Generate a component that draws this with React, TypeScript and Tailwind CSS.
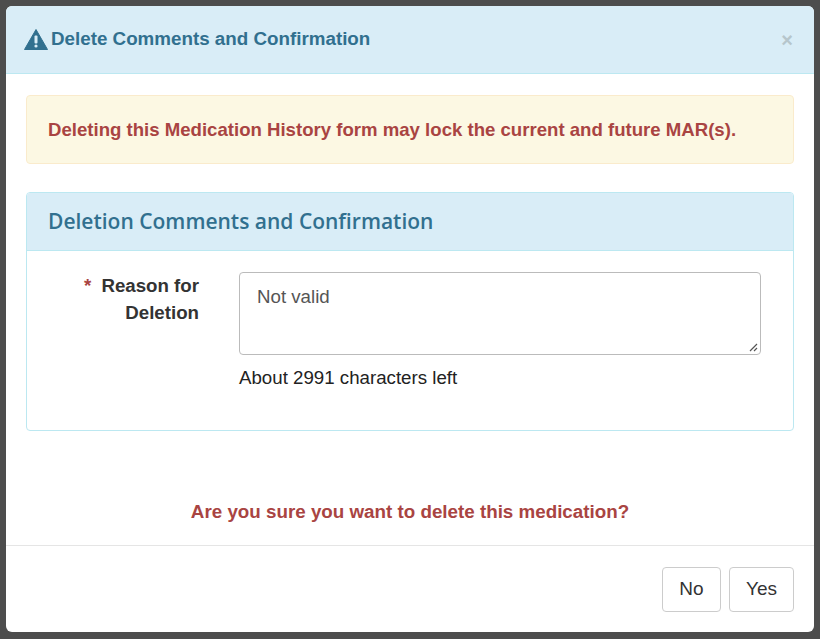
export default function App() {
  return (
    <div className="w-[820px] h-[639px] bg-[#4d4d4d] p-[6px] overflow-hidden" style={{ fontFamily: '"Liberation Sans", Arial, sans-serif' }}>
      <div className="w-[808px] h-[626px] bg-white rounded-[6px] overflow-hidden flex flex-col">
        <div className="h-[68px] shrink-0 bg-[#d9edf7] border-b border-[#bce8f1] flex items-center px-[18px] justify-between">
          <div className="flex items-center gap-[3px] text-[#31708f] font-bold text-[18.8px]">
            <svg width="24" height="21" viewBox="0 0 24 21"><path d="M12 0.5 L23.5 20.5 H0.5 Z" fill="#31708f" strokeLinejoin="round" stroke="#31708f" strokeWidth="1"/><rect x="10.5" y="6.5" width="3" height="8" rx="1" fill="#d9edf7"/><circle cx="12" cy="17" r="1.6" fill="#d9edf7"/></svg>
            <span>Delete Comments and Confirmation</span>
          </div>
          <span className="text-[#b6c6cc] font-bold text-[20px] mr-[3px]">×</span>
        </div>
        <div className="px-[20px] pt-[21px] flex-1">
          <div className="h-[69px] bg-[#fcf8e3] border border-[#faebcc] rounded-[4px] flex items-center px-[21px] text-[#a94442] font-bold text-[18.6px]">
            Deleting this Medication History form may lock the current and future MAR(s).
          </div>
          <div className="mt-[28px] h-[239px] border border-[#bce8f1] rounded-[4px] overflow-hidden">
            <div className="h-[58px] bg-[#d9edf7] border-b border-[#bce8f1] flex items-center px-[21px] text-[#31708f] text-[21px] font-semibold" style={{ fontFamily: '"Open Sans", sans-serif' }}>
              Deletion Comments and Confirmation
            </div>
            <div className="flex pt-[21px]">
              <div className="w-[172px] text-right text-[18.7px] font-bold text-[#333] leading-[27px]">
                <span className="text-[#a94442] mr-[10px]">*</span>Reason for<br />Deletion
              </div>
              <div className="ml-[40px] w-[522px]">
                <div className="h-[83px] border border-[#bbb] rounded-[4px] px-[17px] py-[10px] text-[18.7px] text-[#555] relative">
                  Not valid
                  <svg className="absolute right-[2px] bottom-[2px]" width="10" height="10" viewBox="0 0 10 10"><path d="M9 2 L2 9 M9 6 L6 9" stroke="#555" strokeWidth="1.2"/></svg>
                </div>
                <div className="mt-[9px] text-[18.7px] text-[#222]">About 2991 characters left</div>
              </div>
            </div>
          </div>
          <div className="mt-[67px] text-center text-[#a94442] font-bold text-[18.8px]">Are you sure you want to delete this medication?</div>
        </div>
        <div className="h-[87px] shrink-0 border-t border-[#e5e5e5] flex items-center justify-end gap-[8px] px-[20px]">
          <button className="w-[59px] h-[45px] border border-[#ccc] rounded-[4px] text-[19px] text-[#333]">No</button>
          <button className="w-[65px] h-[45px] border border-[#ccc] rounded-[4px] text-[19px] text-[#333]">Yes</button>
        </div>
      </div>
    </div>
  );
}
